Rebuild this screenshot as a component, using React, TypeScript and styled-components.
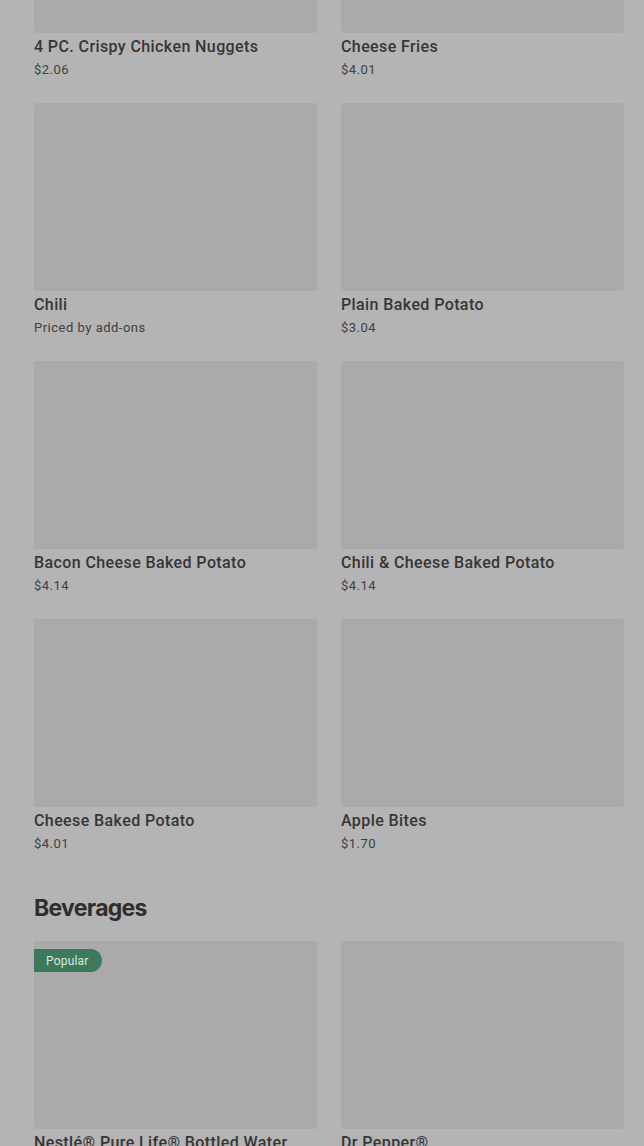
import React from 'react';
import styled, { createGlobalStyle } from 'styled-components';

const GlobalStyle = createGlobalStyle`
  html, body {
    margin: 0;
    padding: 0;
    background: #b4b4b4;
    overflow: hidden;
  }
  body {
    font-family: Roboto, "Liberation Sans", sans-serif;
  }
`;

interface MenuItem {
  name: string;
  price: string;
  badge?: string;
}

interface SectionData {
  title?: string;
  items: MenuItem[];
}

const sections: SectionData[] = [
  {
    items: [
      { name: '4 PC. Crispy Chicken Nuggets', price: '$2.06' },
      { name: 'Cheese Fries', price: '$4.01' },
      { name: 'Chili', price: 'Priced by add-ons' },
      { name: 'Plain Baked Potato', price: '$3.04' },
      { name: 'Bacon Cheese Baked Potato', price: '$4.14' },
      { name: 'Chili & Cheese Baked Potato', price: '$4.14' },
      { name: 'Cheese Baked Potato', price: '$4.01' },
      { name: 'Apple Bites', price: '$1.70' },
    ],
  },
  {
    title: 'Beverages',
    items: [
      { name: 'Nestlé® Pure Life® Bottled Water', price: '$1.99', badge: 'Popular' },
      { name: 'Dr Pepper®', price: '$2.29' },
    ],
  },
];

// the page is scrolled part-way down the menu
const Scroller = styled.div`
  margin-top: -155px;
`;

const Section = styled.section`
  padding: 0 20px 39px 34px;
`;

const SectionTitle = styled.h2`
  margin: 0 0 17px;
  font-family: Inter, "Liberation Sans", sans-serif;
  font-size: 23px;
  line-height: 32px;
  font-weight: 700;
  letter-spacing: -0.7px;
  color: #2e2e2e;
`;

const Grid = styled.div`
  display: grid;
  grid-template-columns: 283px 283px;
  column-gap: 24px;
  row-gap: 24px;
`;

const Card = styled.div`
  display: flex;
  flex-direction: column;
`;

const ImageBox = styled.div`
  position: relative;
  height: 188px;
  background: #aaaaaa;
  border-radius: 2px;
`;

const Badge = styled.span`
  position: absolute;
  top: 8px;
  left: 0;
  height: 23px;
  padding: 0 13px 0 12px;
  display: flex;
  align-items: center;
  background: #3d7a5c;
  color: #dbe6e0;
  font-size: 12px;
  letter-spacing: 0.2px;
  border-radius: 0 12px 12px 0;
`;

const Name = styled.div`
  margin-top: 4px;
  font-size: 16px;
  line-height: 20px;
  font-weight: 500;
  letter-spacing: 0.4px;
  color: #363636;
  white-space: nowrap;
`;

const Price = styled.div`
  margin-top: 4px;
  font-size: 13px;
  line-height: 18px;
  letter-spacing: 0.5px;
  color: #404040;
`;

const App: React.FC = () => {
  return (
    <>
      <GlobalStyle />
      <Scroller>
        {sections.map((section, i) => (
          <Section key={i}>
            {section.title && <SectionTitle>{section.title}</SectionTitle>}
            <Grid>
              {section.items.map((item) => (
                <Card key={item.name}>
                  <ImageBox>{item.badge && <Badge>{item.badge}</Badge>}</ImageBox>
                  <Name>{item.name}</Name>
                  <Price>{item.price}</Price>
                </Card>
              ))}
            </Grid>
          </Section>
        ))}
      </Scroller>
    </>
  );
};

export default App;
